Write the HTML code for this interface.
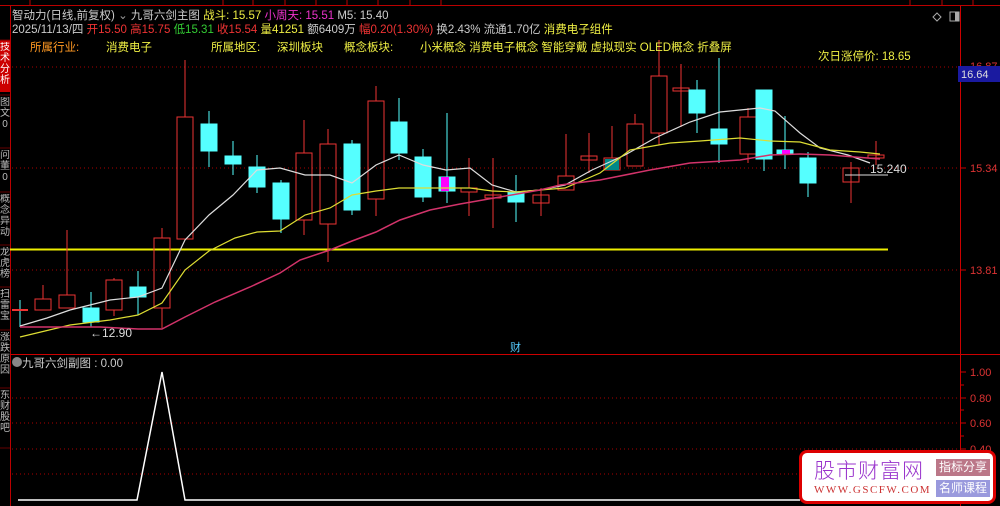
<!DOCTYPE html><html><head><meta charset="utf-8"><style>
body{margin:0;background:#000;width:1000px;height:506px;overflow:hidden;font-family:"Liberation Sans","Noto Sans CJK SC",sans-serif;position:relative}
.t{position:absolute;white-space:nowrap;font-size:11.5px}
.v{position:absolute;left:0;width:10px;font-size:10px;line-height:11px;color:#bbb;overflow:hidden;word-break:break-all;text-align:center}
</style></head><body>
<svg width="1000" height="506" style="position:absolute;left:0;top:0" font-family="Liberation Sans, Noto Sans CJK SC, sans-serif">
<rect x="0" y="0" width="1000" height="6" fill="#000"/>
<line x1="0" y1="5.5" x2="1000" y2="5.5" stroke="#b00" />
<g stroke="#b00"><line x1="30" y1="0" x2="30" y2="6"/><line x1="223" y1="0" x2="223" y2="6"/><line x1="253" y1="0" x2="253" y2="6"/><line x1="285" y1="0" x2="285" y2="6"/><line x1="316" y1="0" x2="316" y2="6"/><line x1="347" y1="0" x2="347" y2="6"/><line x1="378" y1="0" x2="378" y2="6"/><line x1="410" y1="0" x2="410" y2="6"/><line x1="441" y1="0" x2="441" y2="6"/><line x1="910" y1="0" x2="910" y2="6"/><line x1="942" y1="0" x2="942" y2="6"/><line x1="973" y1="0" x2="973" y2="6"/></g>
<rect x="0" y="6" width="10" height="500" fill="#000"/>
<rect x="0" y="40" width="10" height="52" fill="#c00"/>
<line x1="10.5" y1="6" x2="10.5" y2="506" stroke="#b00"/>
<g stroke="#600"><line x1="0" y1="40" x2="10" y2="40"/><line x1="0" y1="95" x2="10" y2="95"/><line x1="0" y1="148" x2="10" y2="148"/><line x1="0" y1="192" x2="10" y2="192"/><line x1="0" y1="245" x2="10" y2="245"/><line x1="0" y1="287" x2="10" y2="287"/><line x1="0" y1="330" x2="10" y2="330"/><line x1="0" y1="388" x2="10" y2="388"/><line x1="0" y1="448" x2="10" y2="448"/></g>
<line x1="960.5" y1="6" x2="960.5" y2="506" stroke="#c00"/>
<line x1="10" y1="354.5" x2="1000" y2="354.5" stroke="#c00"/>
<g stroke="#a00" stroke-dasharray="1,3"><line x1="12" y1="67" x2="958" y2="67"/><line x1="12" y1="168" x2="958" y2="168"/><line x1="12" y1="270" x2="958" y2="270"/><line x1="12" y1="398" x2="958" y2="398"/><line x1="12" y1="423" x2="958" y2="423"/><line x1="12" y1="449" x2="958" y2="449"/><line x1="12" y1="474" x2="958" y2="474"/></g>
<g stroke="#c00"><line x1="960" y1="372" x2="966" y2="372"/><line x1="960" y1="385" x2="964" y2="385"/><line x1="960" y1="398" x2="966" y2="398"/><line x1="960" y1="410" x2="964" y2="410"/><line x1="960" y1="423" x2="966" y2="423"/><line x1="960" y1="436" x2="964" y2="436"/><line x1="960" y1="449" x2="966" y2="449"/><line x1="960" y1="168" x2="966" y2="168"/><line x1="960" y1="270" x2="966" y2="270"/></g>
<g fill="#d33" font-size="11"><text x="970" y="70">16.87</text><text x="970" y="172">15.34</text><text x="970" y="274">13.81</text><text x="970" y="376">1.00</text><text x="970" y="402">0.80</text><text x="970" y="427">0.60</text><text x="970" y="453">0.40</text></g>
<rect x="958" y="66" width="42" height="16" fill="#1a1aa0"/><text x="961" y="78" fill="#ddd" font-size="11">16.64</text>
<line x1="10" y1="249.5" x2="888" y2="249.5" stroke="#ee0" stroke-width="2"/>
<g stroke="#e33" fill="none" stroke-width="1">
<line x1="43" y1="285" x2="43" y2="299"/><rect x="35" y="299" width="16" height="11"/>
<line x1="67" y1="230" x2="67" y2="295"/><rect x="59" y="295" width="16" height="13"/>
<line x1="114" y1="278" x2="114" y2="280"/><rect x="106" y="280" width="16" height="30"/><line x1="114" y1="310" x2="114" y2="316"/>
<line x1="162" y1="228" x2="162" y2="238"/><rect x="154" y="238" width="16" height="70"/><line x1="162" y1="308" x2="162" y2="328"/>
<line x1="185" y1="60" x2="185" y2="117"/><rect x="177" y="117" width="16" height="122"/>
<line x1="304" y1="120" x2="304" y2="153"/><rect x="296" y="153" width="16" height="67"/><line x1="304" y1="220" x2="304" y2="235"/>
<line x1="328" y1="129" x2="328" y2="144"/><rect x="320" y="144" width="16" height="80"/><line x1="328" y1="224" x2="328" y2="262"/>
<line x1="376" y1="86" x2="376" y2="101"/><rect x="368" y="101" width="16" height="98"/><line x1="376" y1="199" x2="376" y2="216"/>
<line x1="469" y1="158" x2="469" y2="188"/><rect x="461" y="188" width="16" height="4"/><line x1="469" y1="192" x2="469" y2="216"/>
<line x1="493" y1="158" x2="493" y2="228"/><rect x="485" y="195" width="16" height="3"/>
<line x1="541" y1="188" x2="541" y2="216"/><rect x="533" y="195" width="16" height="8"/>
<line x1="566" y1="134" x2="566" y2="176"/><rect x="558" y="176" width="16" height="14"/>
<line x1="589" y1="133" x2="589" y2="173"/><rect x="581" y="156" width="16" height="4"/>
<line x1="612" y1="126" x2="612" y2="158"/><rect x="604" y="158" width="16" height="12"/>
<line x1="635" y1="114" x2="635" y2="124"/><rect x="627" y="124" width="16" height="42"/>
<line x1="659" y1="40" x2="659" y2="76"/><rect x="651" y="76" width="16" height="57"/><line x1="659" y1="133" x2="659" y2="145"/>
<line x1="681" y1="64" x2="681" y2="127"/><rect x="673" y="88" width="16" height="3"/>
<line x1="748" y1="108" x2="748" y2="117"/><rect x="740" y="117" width="16" height="37"/><line x1="748" y1="154" x2="748" y2="163"/>
<line x1="851" y1="162" x2="851" y2="203"/><rect x="843" y="168" width="16" height="14"/>
<line x1="876" y1="141" x2="876" y2="165"/><rect x="868" y="155" width="16" height="3"/>
</g>
<g fill="#5ff" stroke="#5ff">
<line x1="20" y1="300" x2="20" y2="327"/><line x1="12" y1="310" x2="28" y2="310" stroke="#e33" stroke-width="2"/>
<line x1="91" y1="292" x2="91" y2="327"/><rect x="83" y="308" width="16" height="14"/>
<line x1="138" y1="271" x2="138" y2="315"/><rect x="130" y="287" width="16" height="10"/>
<line x1="209" y1="111" x2="209" y2="167"/><rect x="201" y="124" width="16" height="27"/>
<line x1="233" y1="141" x2="233" y2="175"/><rect x="225" y="156" width="16" height="8"/>
<line x1="257" y1="155" x2="257" y2="193"/><rect x="249" y="167" width="16" height="20"/>
<line x1="281" y1="180" x2="281" y2="233"/><rect x="273" y="183" width="16" height="36"/>
<line x1="352" y1="140" x2="352" y2="215"/><rect x="344" y="144" width="16" height="66"/>
<line x1="399" y1="98" x2="399" y2="160"/><rect x="391" y="122" width="16" height="31"/>
<line x1="423" y1="149" x2="423" y2="202"/><rect x="415" y="157" width="16" height="40"/>
<line x1="447" y1="113" x2="447" y2="203"/><rect x="439" y="177" width="16" height="14"/>
<line x1="516" y1="175" x2="516" y2="222"/><rect x="508" y="192" width="16" height="10"/>
<line x1="697" y1="80" x2="697" y2="133"/><rect x="689" y="90" width="16" height="23"/>
<line x1="719" y1="58" x2="719" y2="163"/><rect x="711" y="129" width="16" height="15"/>
<line x1="764" y1="90" x2="764" y2="171"/><rect x="756" y="90" width="16" height="69"/>
<line x1="785" y1="116" x2="785" y2="169"/><rect x="777" y="150" width="16" height="4"/>
<line x1="808" y1="152" x2="808" y2="197"/><rect x="800" y="158" width="16" height="25"/>
</g>
<rect x="441" y="177" width="8" height="14" fill="#f0f"/><rect x="782" y="150" width="8" height="4" fill="#f0f"/>
<rect x="605" y="159" width="14" height="11" fill="#088"/>
<g fill="none" stroke-width="1.2">
<polyline stroke="#ddd" points="20,326 47,318 70,310 110,300 138,297 162,288 185,240 209,215 233,195 257,170 280,168 305,175 330,175 352,183 376,165 399,155 423,165 446,170 470,168 492,185 516,192 540,190 565,185 592,170 625,155 655,138 690,122 720,112 740,110 760,108 775,111 800,133 820,148 848,155 870,163"/>
<polyline stroke="#dd3" points="20,337 70,325 110,320 138,315 162,303 185,270 209,251 235,238 257,232 280,231 305,215 330,208 352,195 376,191 399,188 446,188 470,188 492,191 516,192 540,190 565,188 600,173 630,150 670,143 700,141 740,138 770,141 800,142 830,150 860,152 880,154"/>
<polyline stroke="#d2336a" stroke-width="1.5" points="20,327 100,327 138,329 162,329 185,317 215,302 250,287 280,273 300,260 330,250 352,241 376,232 400,220 430,210 460,204 500,197 540,190 560,185 600,180 650,170 690,163 740,160 770,155 800,154 830,155 880,159"/>
<polyline stroke="#fff" stroke-width="1.5" points="18,500 137,500 162,372 185,500 800,500"/>
</g>
<line x1="845" y1="175" x2="888" y2="175" stroke="#ddd"/>
<text x="870" y="173" fill="#ddd" font-size="12">15.240</text>
<text x="90" y="337" fill="#ddd" font-size="12">←12.90</text>
<text x="510" y="351" fill="#5cf" font-size="11">财</text>
<path d="M933 17 l4 -4 4 4 -4 4z" fill="none" stroke="#aaa"/><rect x="950" y="12" width="9" height="9" fill="none" stroke="#aaa"/><rect x="955" y="12" width="4" height="9" fill="#aaa"/>
<circle cx="17" cy="362" r="5" fill="#888"/>
</svg>
<div class="v" style="top:42px;height:50px;color:#fff">技术分析</div>
<div class="v" style="top:97px;height:50px">图文0</div>
<div class="v" style="top:150px;height:42px">问董0</div>
<div class="v" style="top:194px;height:50px">概念异动</div>
<div class="v" style="top:247px;height:40px">龙虎榜</div>
<div class="v" style="top:289px;height:40px">扫雷宝</div>
<div class="v" style="top:332px;height:55px">涨跌原因</div>
<div class="v" style="top:390px;height:56px">东财股吧</div>
<div class="t" style="left:12px;top:7px;color:#ccc"><span>智动力(日线,前复权)</span> <span style="color:#999">⌄</span> 九哥六剑主图 <span style="color:#ee4">战斗: 15.57</span> <span style="color:#e3c">小周天: 15.51</span> <span style="color:#ccc">M5: 15.40</span></div>
<div class="t" style="left:12px;top:21px;color:#ccc">2025/11/13/四 <span style="color:#e33">开15.50 高15.75</span> <span style="color:#3c3">低15.31</span> <span style="color:#e33">收15.54</span> <span style="color:#ee4">量41251</span> 额6409万 <span style="color:#e33">幅0.20(1.30%)</span> 换2.43% 流通1.70亿 <span style="color:#ee4">消费电子组件</span></div>
<div class="t" style="left:30px;top:39px;color:#f92">所属行业:</div>
<div class="t" style="left:106px;top:39px;color:#ee4">消费电子</div>
<div class="t" style="left:211px;top:39px;color:#ee4">所属地区:</div>
<div class="t" style="left:277px;top:39px;color:#ee4">深圳板块</div>
<div class="t" style="left:344px;top:39px;color:#ee4">概念板块:</div>
<div class="t" style="left:420px;top:39px;color:#ee4">小米概念 消费电子概念 智能穿戴 虚拟现实 OLED概念 折叠屏</div>
<div class="t" style="left:818px;top:48px;color:#ee4">次日涨停价: 18.65</div>
<div class="t" style="left:22px;top:355px;color:#ccc">九哥六剑副图 : 0.00</div>
<div style="position:absolute;left:799px;top:450px;width:197px;height:54px;background:#fff;border:3px solid #d00;border-radius:8px;box-sizing:border-box">
<div class="t" style="left:12px;top:2px;font-size:21px;color:#93c;letter-spacing:1px;font-family:'Noto Sans CJK SC',sans-serif;font-weight:300">股市财富网</div>
<div class="t" style="left:12px;top:31px;font-size:11px;color:#c33;font-family:'Liberation Serif',serif;letter-spacing:1.5px">WWW.GSCFW.COM</div>
<div class="t" style="left:134px;top:6px;width:54px;height:17px;background:#b78;color:#fff;font-size:12px;text-align:center;line-height:17px">指标分享</div>
<div class="t" style="left:134px;top:27px;width:54px;height:17px;background:#99d;color:#fff;font-size:12px;text-align:center;line-height:17px">名师课程</div>
</div>
</body></html>
